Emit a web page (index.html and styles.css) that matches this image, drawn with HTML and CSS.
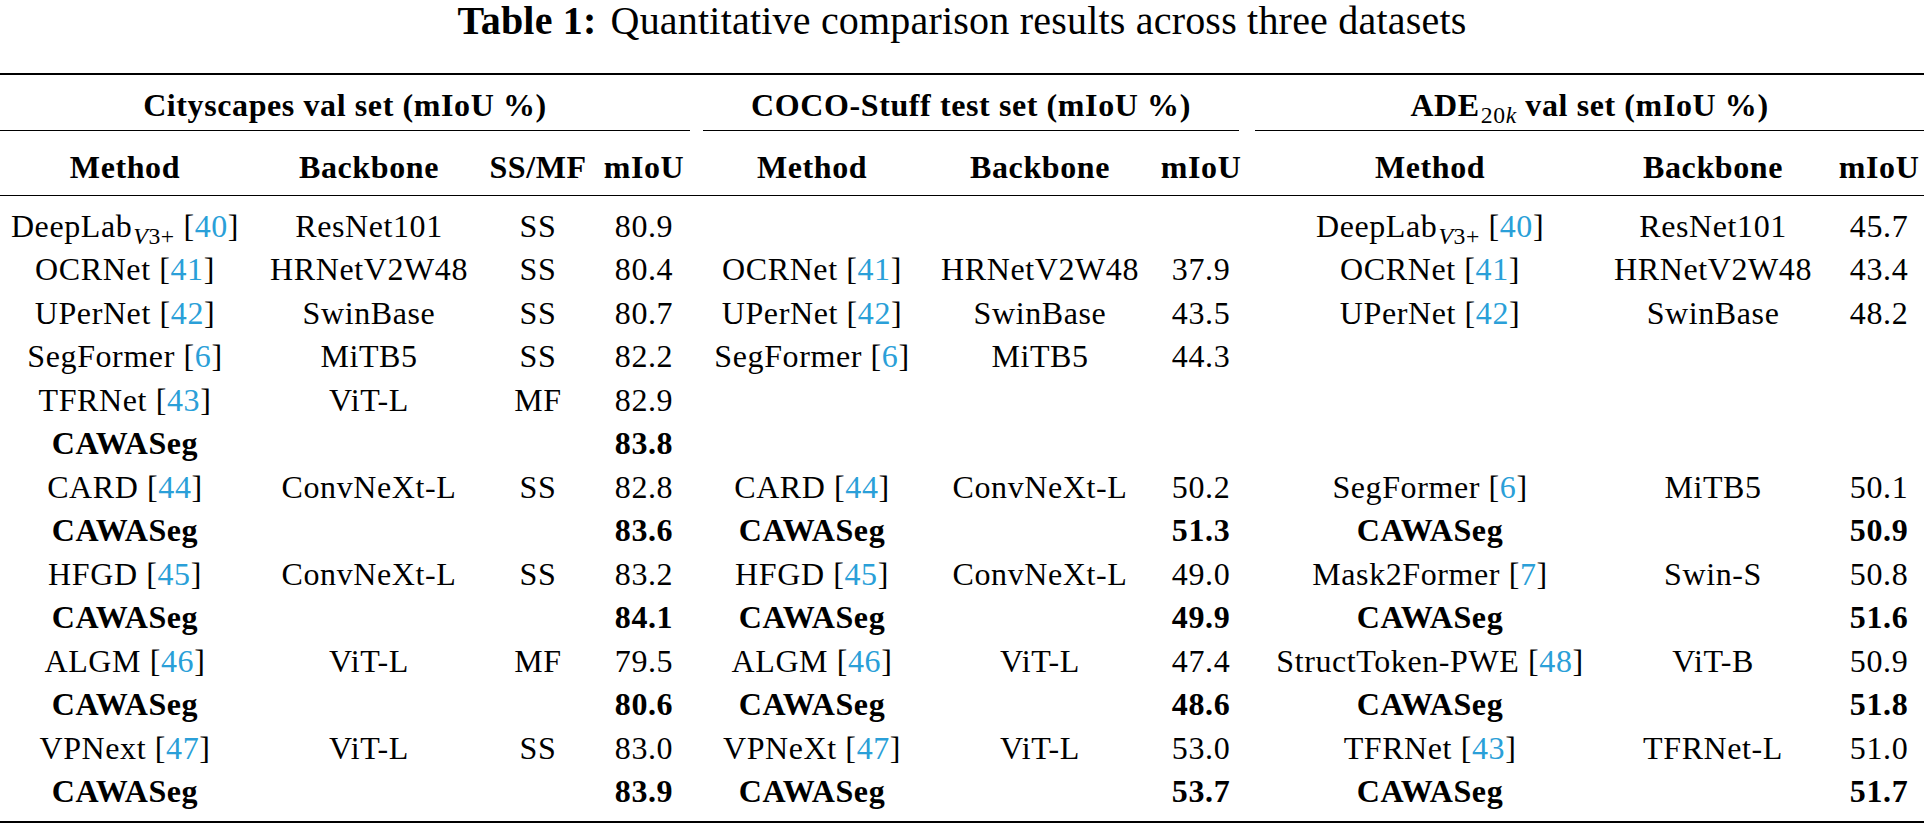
FILE: index.html
```html
<!DOCTYPE html>
<html lang="en">
<head>
<meta charset="utf-8">
<title>Table 1</title>
<link rel="stylesheet" href="styles.css">
</head>
<body>
<div class="caption"><span class="label">Table 1:</span>Quantitative comparison results across three datasets</div>
<table class="results">
  <colgroup>
    <col class="c1"><col class="c2"><col class="c3"><col class="c4">
    <col class="c5"><col class="c6"><col class="c7">
    <col class="c8"><col class="c9"><col class="c10">
  </colgroup>
  <thead>
    <tr class="group-row">
      <th colspan="4"><div class="cmid cmid-city">Cityscapes val set (mIoU %)</div></th>
      <th colspan="3"><div class="cmid cmid-coco">COCO-Stuff test set (mIoU %)</div></th>
      <th colspan="3"><div class="cmid cmid-ade">ADE<span class="sub">20<i>k</i></span> val set (mIoU %)</div></th>
    </tr>
    <tr class="head-row">
      <th>Method</th><th>Backbone</th><th>SS/MF</th><th>mIoU</th>
      <th>Method</th><th>Backbone</th><th>mIoU</th>
      <th>Method</th><th>Backbone</th><th>mIoU</th>
    </tr>
  </thead>
  <tbody>
    <tr>
      <td>DeepLab<span class="sub"><i>V</i>3+</span> [<span class="cite">40</span>]</td><td>ResNet101</td><td>SS</td><td>80.9</td>
      <td></td><td></td><td></td>
      <td>DeepLab<span class="sub"><i>V</i>3+</span> [<span class="cite">40</span>]</td><td>ResNet101</td><td>45.7</td>
    </tr>
    <tr>
      <td>OCRNet [<span class="cite">41</span>]</td><td>HRNetV2W48</td><td>SS</td><td>80.4</td>
      <td>OCRNet [<span class="cite">41</span>]</td><td>HRNetV2W48</td><td>37.9</td>
      <td>OCRNet [<span class="cite">41</span>]</td><td>HRNetV2W48</td><td>43.4</td>
    </tr>
    <tr>
      <td>UPerNet [<span class="cite">42</span>]</td><td>SwinBase</td><td>SS</td><td>80.7</td>
      <td>UPerNet [<span class="cite">42</span>]</td><td>SwinBase</td><td>43.5</td>
      <td>UPerNet [<span class="cite">42</span>]</td><td>SwinBase</td><td>48.2</td>
    </tr>
    <tr>
      <td>SegFormer [<span class="cite">6</span>]</td><td>MiTB5</td><td>SS</td><td>82.2</td>
      <td>SegFormer [<span class="cite">6</span>]</td><td>MiTB5</td><td>44.3</td>
      <td></td><td></td><td></td>
    </tr>
    <tr>
      <td>TFRNet [<span class="cite">43</span>]</td><td>ViT-L</td><td>MF</td><td>82.9</td>
      <td></td><td></td><td></td>
      <td></td><td></td><td></td>
    </tr>
    <tr>
      <td class="b">CAWASeg</td><td></td><td></td><td class="b">83.8</td>
      <td></td><td></td><td></td>
      <td></td><td></td><td></td>
    </tr>
    <tr>
      <td>CARD [<span class="cite">44</span>]</td><td>ConvNeXt-L</td><td>SS</td><td>82.8</td>
      <td>CARD [<span class="cite">44</span>]</td><td>ConvNeXt-L</td><td>50.2</td>
      <td>SegFormer [<span class="cite">6</span>]</td><td>MiTB5</td><td>50.1</td>
    </tr>
    <tr>
      <td class="b">CAWASeg</td><td></td><td></td><td class="b">83.6</td>
      <td class="b">CAWASeg</td><td></td><td class="b">51.3</td>
      <td class="b">CAWASeg</td><td></td><td class="b">50.9</td>
    </tr>
    <tr>
      <td>HFGD [<span class="cite">45</span>]</td><td>ConvNeXt-L</td><td>SS</td><td>83.2</td>
      <td>HFGD [<span class="cite">45</span>]</td><td>ConvNeXt-L</td><td>49.0</td>
      <td>Mask2Former [<span class="cite">7</span>]</td><td>Swin-S</td><td>50.8</td>
    </tr>
    <tr>
      <td class="b">CAWASeg</td><td></td><td></td><td class="b">84.1</td>
      <td class="b">CAWASeg</td><td></td><td class="b">49.9</td>
      <td class="b">CAWASeg</td><td></td><td class="b">51.6</td>
    </tr>
    <tr>
      <td>ALGM [<span class="cite">46</span>]</td><td>ViT-L</td><td>MF</td><td>79.5</td>
      <td>ALGM [<span class="cite">46</span>]</td><td>ViT-L</td><td>47.4</td>
      <td>StructToken-PWE [<span class="cite">48</span>]</td><td>ViT-B</td><td>50.9</td>
    </tr>
    <tr>
      <td class="b">CAWASeg</td><td></td><td></td><td class="b">80.6</td>
      <td class="b">CAWASeg</td><td></td><td class="b">48.6</td>
      <td class="b">CAWASeg</td><td></td><td class="b">51.8</td>
    </tr>
    <tr>
      <td>VPNext [<span class="cite">47</span>]</td><td>ViT-L</td><td>SS</td><td>83.0</td>
      <td>VPNeXt [<span class="cite">47</span>]</td><td>ViT-L</td><td>53.0</td>
      <td>TFRNet [<span class="cite">43</span>]</td><td>TFRNet-L</td><td>51.0</td>
    </tr>
    <tr>
      <td class="b">CAWASeg</td><td></td><td></td><td class="b">83.9</td>
      <td class="b">CAWASeg</td><td></td><td class="b">53.7</td>
      <td class="b">CAWASeg</td><td></td><td class="b">51.7</td>
    </tr>
  </tbody>
</table>
</body>
</html>
```
FILE: styles.css
```css
html, body {
  margin: 0;
  padding: 0;
  background: #ffffff;
}

body {
  width: 1924px;
  height: 826px;
  overflow: hidden;
  font-family: "Liberation Serif", "Times New Roman", serif;
  color: #000000;
}

.caption {
  height: 42px;
  line-height: 42px;
  margin: 0 0 31px;
  text-align: center;
  font-size: 40px;
  letter-spacing: 0.2px;
  white-space: nowrap;
}

.caption .label {
  font-weight: bold;
  margin-right: 14px;
}

.results {
  width: 1924px;
  table-layout: fixed;
  border-collapse: separate;
  border-spacing: 0;
  font-size: 32px;
  letter-spacing: 0.6px;
}

.c1 { width: 250px; }
.c2 { width: 238px; }
.c3 { width: 100px; }
.c4 { width: 112px; }
.c5 { width: 224px; }
.c6 { width: 232px; }
.c7 { width: 90px; }
.c8 { width: 358px; }
.c9 { width: 218px; }
.c10 { width: 102px; }

.results th,
.results td {
  padding: 0;
  text-align: center;
  white-space: nowrap;
  font-weight: normal;
}

.group-row th {
  border-top: 2.5px solid #000;
  padding-top: 11.5px;
}

.cmid {
  line-height: 36px;
  padding-bottom: 7px;
  border-bottom: 1.5px solid #000;
  font-weight: bold;
}

.cmid-city { margin-right: 10px; }
.cmid-coco { margin: 0 7px 0 3px; }
.cmid-ade { margin-left: 9px; }

.head-row th {
  padding-top: 18.5px;
  padding-bottom: 10px;
  line-height: 36px;
  font-weight: bold;
  border-bottom: 1.5px solid #000;
}

.results tbody td {
  height: 43.5px;
  line-height: 43.5px;
}

.results tbody tr:first-child td {
  padding-top: 8.75px;
}

.results tbody tr:last-child td {
  padding-bottom: 6.75px;
  border-bottom: 2.5px solid #000;
}

.results tbody td:nth-child(8),
.head-row th:nth-child(8) {
  padding-left: 10px;
}

.results tbody td:nth-child(10),
.head-row th:nth-child(10) {
  padding-left: 12px;
}

.results .b {
  font-weight: bold;
}

.sub {
  font-size: 0.74em;
  line-height: 0;
  vertical-align: -0.3em;
  font-weight: normal;
  margin-left: 1px;
}

.cite {
  color: #2a9fd8;
}
```
